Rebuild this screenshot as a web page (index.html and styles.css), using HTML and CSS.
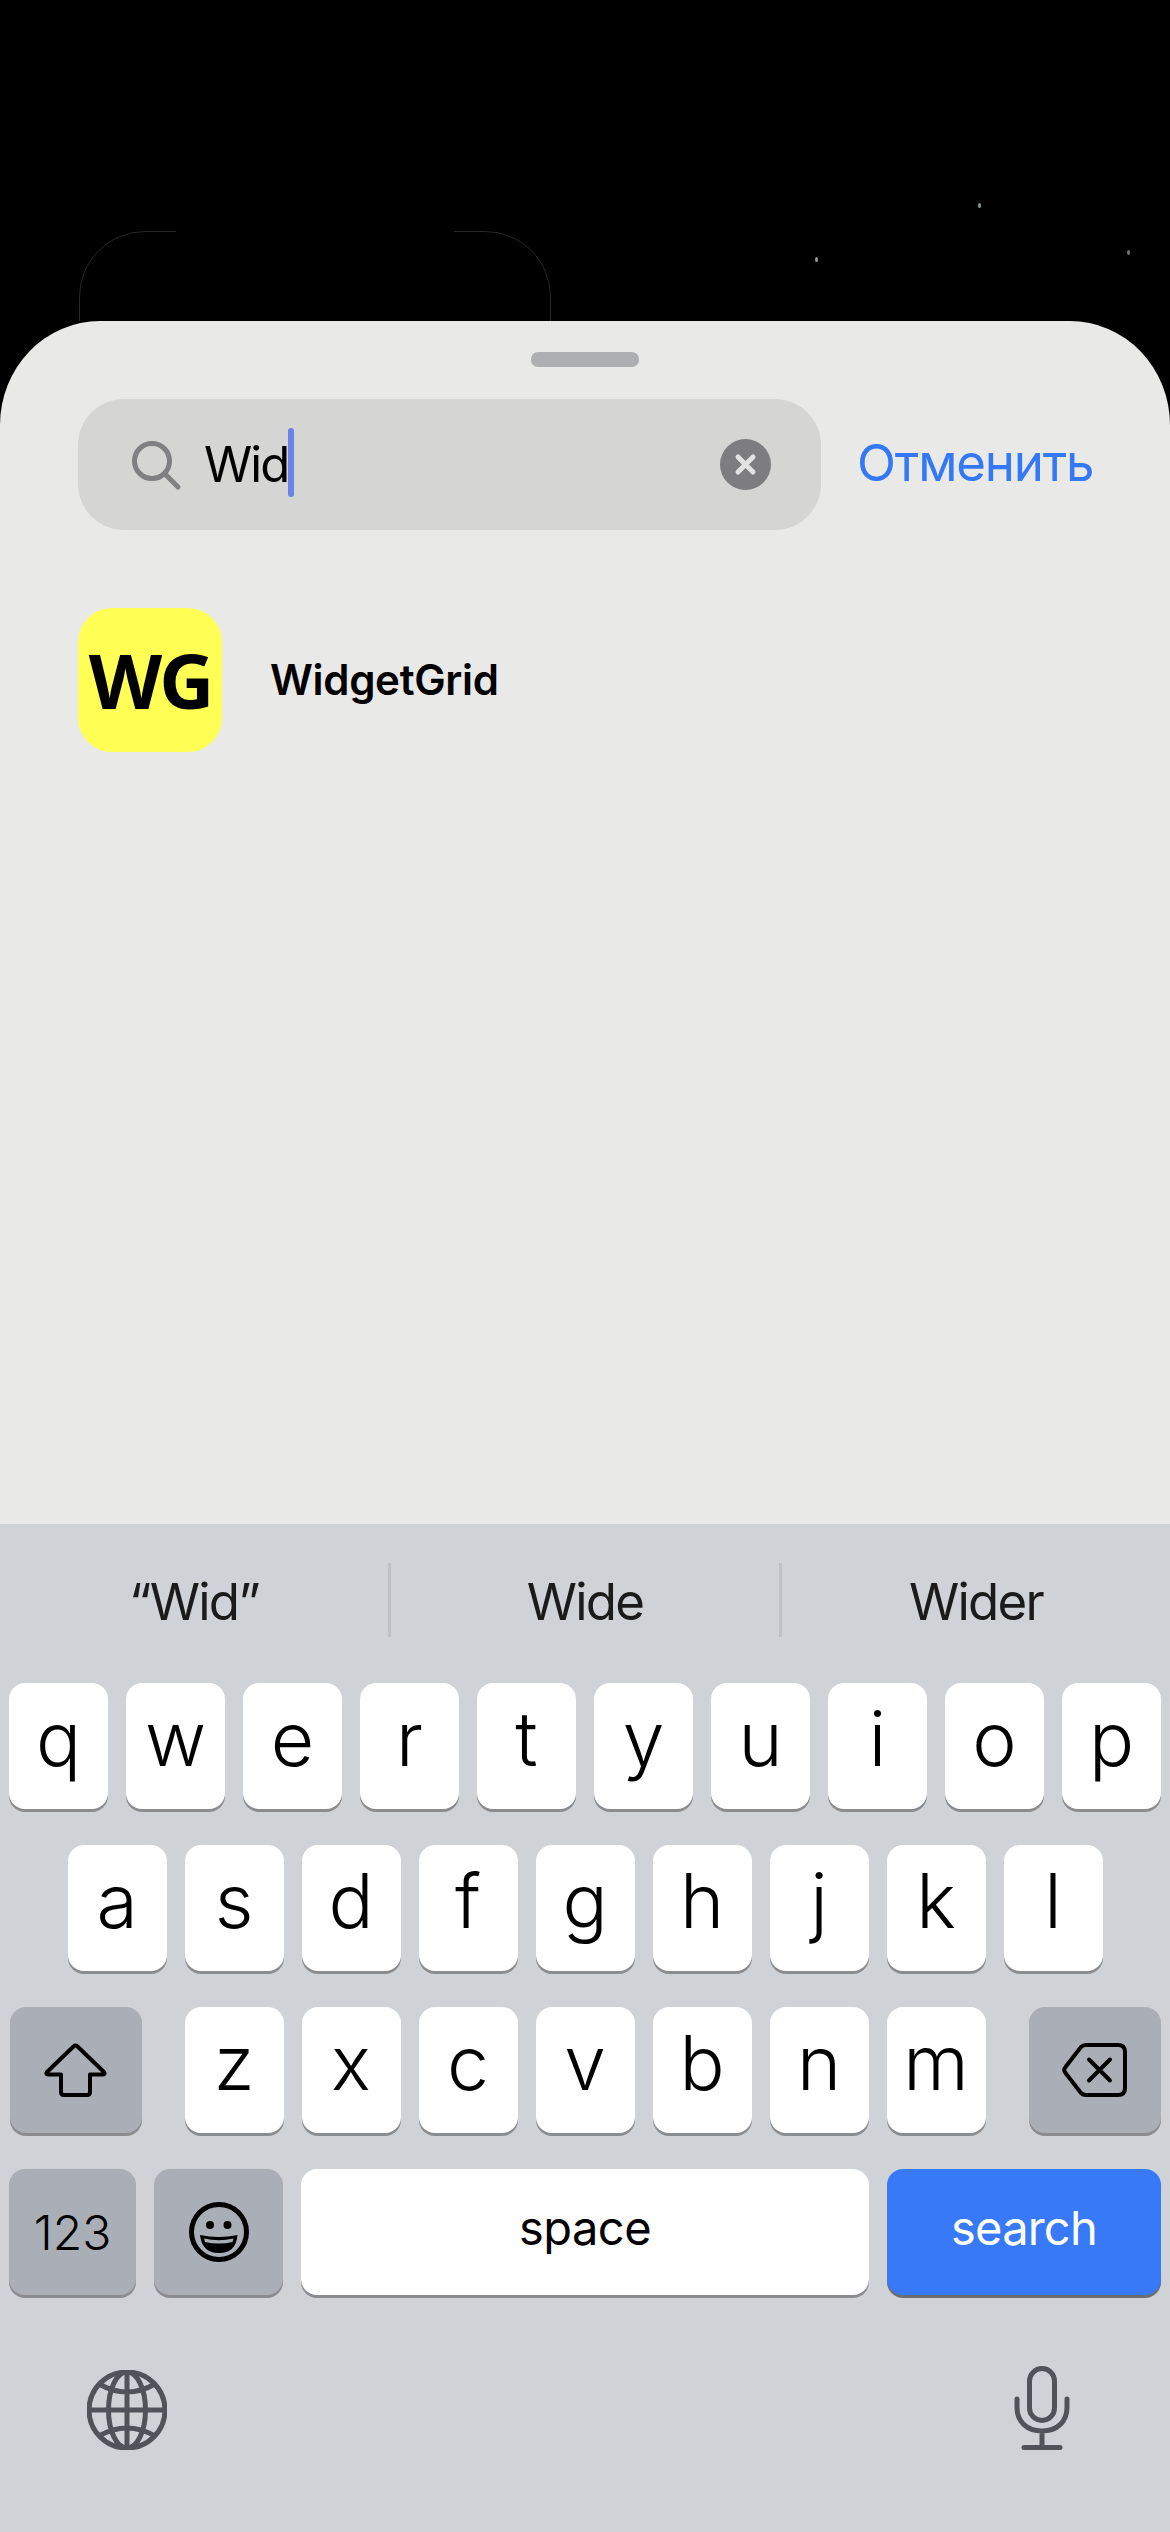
FILE: index.html
```html
<!DOCTYPE html>
<html lang="en">
<head>
    <meta charset="UTF-8">
    <title>Widget Search</title>
    <link rel="stylesheet" href="styles.css">
</head>
<body>
    <!-- Wallpaper behind the sheet -->
    <div class="wallpaper">
        <div class="widget-outline"></div>
        <span class="star star-a"></span>
        <span class="star star-b"></span>
        <span class="star star-c"></span>
    </div>

    <!-- Search sheet -->
    <div class="sheet">
        <div class="grabber"></div>
        <div class="search-row">
            <div class="search-bar">
                <svg class="search-icon" viewBox="0 0 50 50" width="50" height="50">
                    <circle cx="20" cy="20" r="17.5"/>
                    <path d="M33 33 L46 46"/>
                </svg>
                <span class="search-text">Wid</span>
                <span class="cursor"></span>
                <svg class="clear-icon" viewBox="0 0 51 51" width="51" height="51">
                    <circle cx="25.5" cy="25.5" r="25.5"/>
                    <path d="M18 18 L33 33 M33 18 L18 33"/>
                </svg>
            </div>
            <span class="cancel">Отменить</span>
        </div>
        <div class="result">
            <div class="app-icon">WG</div>
            <span class="app-name">WidgetGrid</span>
        </div>
    </div>

    <!-- Keyboard -->
    <div class="keyboard">
        <div class="suggestions">
            <div class="suggestion">“Wid”</div>
            <div class="suggestion">Wide</div>
            <div class="suggestion">Wider</div>
        </div>

        <div class="key-row">
            <div class="key">q</div><div class="key">w</div><div class="key">e</div><div class="key">r</div><div class="key">t</div>
            <div class="key">y</div><div class="key">u</div><div class="key">i</div><div class="key">o</div><div class="key">p</div>
        </div>
        <div class="key-row">
            <div class="key">a</div><div class="key">s</div><div class="key">d</div><div class="key">f</div><div class="key">g</div>
            <div class="key">h</div><div class="key">j</div><div class="key">k</div><div class="key">l</div>
        </div>
        <div class="key-row key-row-split">
            <div class="key key-fn key-wide">
                <svg viewBox="0 0 63 54" width="63" height="54">
                    <path d="M29.5 3.5 a3 3 0 0 1 4 0 L60 29 q1.5 2.5 -1 2.5 H46 V49 q0 3 -3 3 H20 q-3 0 -3 -3 V31.5 H4 q-2.5 0 -1 -2.5 Z"/>
                </svg>
            </div>
            <div class="key">z</div><div class="key">x</div><div class="key">c</div><div class="key">v</div>
            <div class="key">b</div><div class="key">n</div><div class="key">m</div>
            <div class="key key-fn key-wide">
                <svg viewBox="0 0 65 54" width="65" height="54">
                    <path d="M24 2 H56 q7 0 7 7 V45 q0 7 -7 7 H24 q-3 0 -5 -2 L3.5 30 q-2.5 -3 0 -6 L19 4 q2 -2 5 -2 Z"/>
                    <path d="M27 16.5 L48 37.5 M48 16.5 L27 37.5"/>
                </svg>
            </div>
        </div>
        <div class="key-row">
            <div class="key key-fn key-num">123</div>
            <div class="key key-fn key-emoji">
                <svg viewBox="0 0 60 60" width="60" height="60">
                    <circle cx="30" cy="30" r="27.5"/>
                    <circle class="solid" cx="21" cy="23" r="4"/>
                    <circle class="solid" cx="38.5" cy="23" r="4"/>
                    <path class="solid" d="M11 33 Q30 37 48.5 33 Q47 51 30 51 Q13 51 11 33 Z"/>
                    <path class="teeth" d="M15 36.5 Q30 40 44.5 36.5 L43.5 40 Q30 43 16 40 Z"/>
                </svg>
            </div>
            <div class="key key-space">space</div>
            <div class="key key-search">search</div>
        </div>

        <div class="keyboard-footer">
            <svg class="globe" viewBox="0 0 80 80" width="80" height="80">
                <circle cx="40" cy="40" r="38"/>
                <ellipse cx="40" cy="40" rx="18.5" ry="38"/>
                <path d="M40 2 V78 M2 40 H78 M12 14 Q40 30 68 14 M12 66 Q40 50 68 66"/>
            </svg>
            <svg class="mic" viewBox="0 0 56 84" width="56" height="84">
                <rect x="15.5" y="2.5" width="25" height="52" rx="12.5"/>
                <path d="M3 33 V41 C3 56 13 65 28 65 C43 65 53 56 53 41 V33 M28 65 V81 M10 81.5 H46"/>
            </svg>
        </div>
    </div>
</body>
</html>
```

FILE: styles.css
```css
* { box-sizing: border-box; }
body { margin: 0; width: 1170px; height: 2532px; overflow: hidden; background: #000; font-family: Inter, "Noto Sans", sans-serif; color: #000; }

/* --- Wallpaper --- */
.wallpaper { position: relative; height: 321px; overflow: hidden; }
.widget-outline { position: absolute; left: 79px; top: 231px; width: 472px; height: 300px; border: 1px solid #26282b; border-radius: 66px; }
.widget-outline::after { content: ""; position: absolute; left: 96px; right: 96px; top: -1px; height: 1px; background: #000; }
.star { position: absolute; width: 3px; height: 5px; border-radius: 50%; background: #9a9a96; }
.star-a { left: 978px; top: 203px; background: #7f9c98; }
.star-b { left: 815px; top: 257px; }
.star-c { left: 1127px; top: 250px; background: #77736f; }

/* --- Sheet --- */
.sheet { height: 1203px; padding-top: 31px; background: #e9e9e8; border-radius: 100px 100px 0 0 / 104px 104px 0 0; }
.grabber { width: 108px; height: 15px; margin: 0 auto 32px; background: #aeafb0; border-radius: 7px; }
.search-row { display: flex; align-items: center; padding-left: 78px; }
.search-bar { display: flex; align-items: center; width: 743px; height: 131px; padding: 0 50px 0 54px; background: #d5d5d4; border-radius: 46px; }
.search-icon { flex: none; margin-right: 22px; margin-top: 2px; fill: none; stroke: #808082; stroke-width: 5; stroke-linecap: round; }
.search-text { font-size: 49px; line-height: 62px; letter-spacing: -2px; }
.cursor { width: 6px; height: 69px; margin-top: -4px; background: #6b83e6; border-radius: 3px; }
.clear-icon { flex: none; margin-left: auto; }
.clear-icon circle { fill: #7d7d80; }
.clear-icon path { fill: none; stroke: #e2e2e2; stroke-width: 5; stroke-linecap: round; }
.cancel { margin-left: 36px; margin-bottom: 3px; font-size: 51px; line-height: 62px; letter-spacing: -1.2px; color: #3478f6; white-space: nowrap; }

.result { display: flex; align-items: center; margin-top: 78px; padding-left: 78px; }
.app-icon { width: 144px; height: 144px; background: #ffff55; border-radius: 34px; font-family: "Open Sans", sans-serif; font-weight: 700; font-size: 76px; line-height: 144px; text-align: center; letter-spacing: -3px; }
.app-name { margin-left: 48px; margin-bottom: 2px; font-size: 42px; font-weight: 600; letter-spacing: -0.3px; }

/* --- Keyboard --- */
.keyboard { height: 1008px; padding: 0 9px; background: #cfd2d7; }
.suggestions { display: flex; height: 159px; margin: 0 -9px; padding-top: 39px; }
.suggestion { flex: 1; height: 74px; font-size: 51px; line-height: 77px; letter-spacing: -1.8px; text-align: center; color: #1b1b1c; }
.suggestion + .suggestion { border-left: 3px solid #bec1c6; }

.key-row { display: flex; justify-content: center; gap: 18px; margin-bottom: 36px; }
.key-row-split .key-wide:first-child { margin-right: 25px; }
.key-row-split .key-wide:last-child { margin-left: 25px; }
.key { display: flex; align-items: center; justify-content: center; flex: none; width: 99px; height: 126px; background: #fff; border-radius: 16px; box-shadow: 0 3px 0 #8b8c90; font-size: 75px; font-weight: 300; padding-bottom: 15px; }
.key-fn { background: #aaaeb6; padding-bottom: 0; }
.key-wide { width: 132px; }
.key-wide svg { fill: none; stroke: #000; stroke-width: 4; stroke-linejoin: round; stroke-linecap: round; }
.key-num { width: 127px; font-size: 48px; font-weight: 300; padding-bottom: 0; }
.key-emoji { width: 129px; }
.key-emoji svg { fill: none; stroke: #000; stroke-width: 5; }
.key-emoji .solid { fill: #000; stroke: none; }
.key-emoji .teeth { fill: #aaaeb6; stroke: none; }
.key-space { flex: 1; font-size: 47px; font-weight: 400; padding-bottom: 10px; letter-spacing: -0.5px; }
.key-search { width: 274px; font-size: 47px; font-weight: 400; padding-bottom: 10px; letter-spacing: -0.8px; background: #3779f6; color: #fff; box-shadow: 0 3px 0 #6c6e75; }

.keyboard-footer { display: flex; justify-content: space-between; align-items: flex-end; padding: 35px 91px 0 78px; }
.globe { fill: none; stroke: #50545a; stroke-width: 5; }
.mic { fill: none; stroke: #50545a; stroke-width: 5; stroke-linecap: round; }
```
